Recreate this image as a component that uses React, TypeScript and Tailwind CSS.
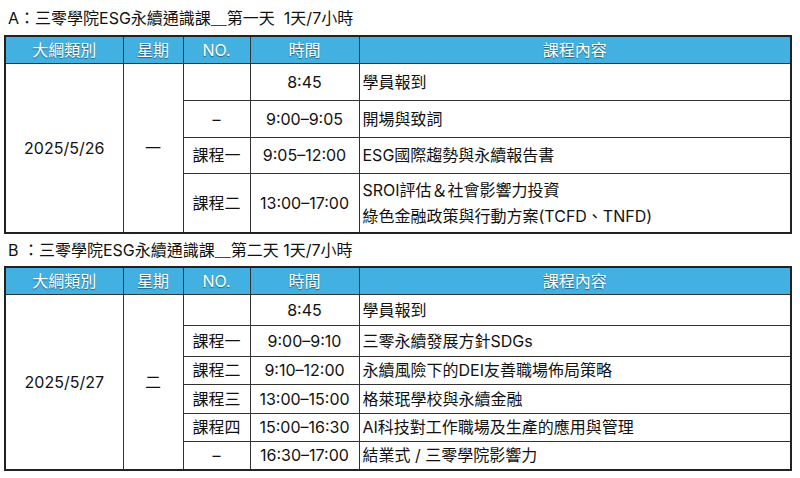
import React from 'react';

type Row = {
  no: string;
  time: string;
  content: string[];
  h: string;
};

type Day = {
  title: string;
  titleH: string;
  date: string;
  weekday: string;
  rows: Row[];
};

const days: Day[] = [
  {
    title: 'A：三零學院ESG永續通識課＿第一天  1天/7小時',
    titleH: 'h-[35px]',
    date: '2025/5/26',
    weekday: '一',
    rows: [
      { no: '', time: '8:45', content: ['學員報到'], h: 'h-[37px]' },
      { no: '–', time: '9:00–9:05', content: ['開場與致詞'], h: 'h-[37px]' },
      { no: '課程一', time: '9:05–12:00', content: ['ESG國際趨勢與永續報告書'], h: 'h-[36px]' },
      {
        no: '課程二',
        time: '13:00–17:00',
        content: ['SROI評估＆社會影響力投資', '綠色金融政策與行動方案(TCFD、TNFD)'],
        h: 'h-[60px]',
      },
    ],
  },
  {
    title: 'B ：三零學院ESG永續通識課＿第二天 1天/7小時',
    titleH: 'h-[32px]',
    date: '2025/5/27',
    weekday: '二',
    rows: [
      { no: '', time: '8:45', content: ['學員報到'], h: 'h-[31px]' },
      { no: '課程一', time: '9:00–9:10', content: ['三零永續發展方針SDGs'], h: 'h-[31px]' },
      { no: '課程二', time: '9:10–12:00', content: ['永續風險下的DEI友善職場佈局策略'], h: 'h-[28px]' },
      { no: '課程三', time: '13:00–15:00', content: ['格萊珉學校與永續金融'], h: 'h-[29px]' },
      { no: '課程四', time: '15:00–16:30', content: ['AI科技對工作職場及生產的應用與管理'], h: 'h-[28px]' },
      { no: '–', time: '16:30–17:00', content: ['結業式 / 三零學院影響力'], h: 'h-[29px]' },
    ],
  },
];

const headers = ['大綱類別', '星期', 'NO.', '時間', '課程內容'];

const Schedule: React.FC<{ day: Day }> = ({ day }) => (
  <div>
    <div className={`${day.titleH} flex items-center pl-[8px] text-[16px] text-[#111] whitespace-pre`}>{day.title}</div>
    <table className="ml-[4px] w-[788px] border-collapse border-2 border-[#222] table-fixed text-[16px] text-[#111]">
      <colgroup>
        <col className="w-[118px]" />
        <col className="w-[60px]" />
        <col className="w-[67px]" />
        <col className="w-[109px]" />
        <col />
      </colgroup>
      <thead>
        <tr className="h-[27px] bg-[#42b1e1] border-b border-[#7a5a4a]">
          {headers.map((h) => (
            <th
              key={h}
              className="border-x border-[#333] font-normal text-white text-[16px] p-0 [text-shadow:0_1px_1px_rgba(0,0,0,0.45)]"
            >
              {h}
            </th>
          ))}
        </tr>
      </thead>
      <tbody>
        {day.rows.map((r, i) => (
          <tr key={i} className={r.h}>
            {i === 0 && (
              <>
                <td rowSpan={day.rows.length} className="border border-[#333] text-center p-0">
                  {day.date}
                </td>
                <td rowSpan={day.rows.length} className="border border-[#333] text-center p-0">
                  {day.weekday}
                </td>
              </>
            )}
            <td className="border border-[#333] text-center p-0">{r.no}</td>
            <td className="border border-[#333] text-center p-0">{r.time}</td>
            <td className="border border-[#333] pl-[3px] p-0 leading-[26px]">
              {r.content.map((c) => (
                <div key={c}>{c}</div>
              ))}
            </td>
          </tr>
        ))}
      </tbody>
    </table>
  </div>
);

export default function App() {
  return (
    <div className="w-[800px] h-[478px] bg-white overflow-hidden font-['Inter','Noto_Sans_CJK_TC',sans-serif]">
      {days.map((d) => (
        <Schedule key={d.date} day={d} />
      ))}
    </div>
  );
}
